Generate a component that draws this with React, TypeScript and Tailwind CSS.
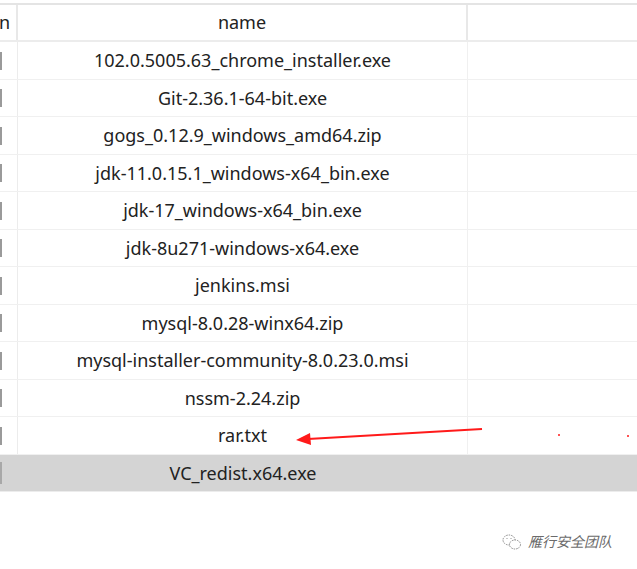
import React from "react";

const files = [
  "102.0.5005.63_chrome_installer.exe",
  "Git-2.36.1-64-bit.exe",
  "gogs_0.12.9_windows_amd64.zip",
  "jdk-11.0.15.1_windows-x64_bin.exe",
  "jdk-17_windows-x64_bin.exe",
  "jdk-8u271-windows-x64.exe",
  "jenkins.msi",
  "mysql-8.0.28-winx64.zip",
  "mysql-installer-community-8.0.23.0.msi",
  "nssm-2.24.zip",
  "rar.txt",
];

export default function App() {
  return (
    <div
      className="relative w-[637px] h-[569px] bg-white overflow-hidden text-[#222]"
      style={{ fontFamily: '"Noto Sans", "Open Sans", sans-serif' }}
    >
      <div className="h-[3px]" />
      <div className="border-t-2 border-[#e4e4e4]">
        {/* header */}
        <div className="flex h-[37px] border-b-2 border-[#ececec] items-center text-[18px]">
          <div className="w-[18px] h-full flex items-center border-r-2 border-[#e8e8e8] overflow-hidden">
            <span className="-ml-[1px]">n</span>
          </div>
          <div className="w-[450px] h-full flex items-center justify-center border-r-2 border-[#e8e8e8]">
            name
          </div>
          <div className="flex-1" />
        </div>
        {files.map((f, i) => (
          <div
            key={f}
            className={`flex ${i % 2 === 0 ? "h-[38px]" : "h-[37px]"} border-b border-[#f0f0f0] items-center text-[18px]`}
          >
            <div className="w-[18px] h-full flex items-center border-r border-[#ececec]">
              <div className="w-[2px] h-[18px] bg-[#9a9a9a] ml-0" />
            </div>
            <div className="w-[450px] h-full flex items-center justify-center border-r border-[#f0f0f0]">
              {f}
            </div>
            <div className="flex-1" />
          </div>
        ))}
        <div className="flex h-[37px] bg-[#d4d4d4] items-center text-[18px] border-b border-[#ececec]">
          <div className="w-[18px] h-full flex items-center">
            <div className="w-[2px] h-[22px] bg-[#a8a8a8]" />
          </div>
          <div className="w-[450px] h-full flex items-center justify-center">VC_redist.x64.exe</div>
          <div className="flex-1" />
        </div>
      </div>

      {/* red arrow annotation */}
      <svg className="absolute left-0 top-0" width="637" height="569">
        <line x1="482" y1="429" x2="308" y2="439" stroke="#ff1a1a" strokeWidth="2" />
        <polygon points="296,440 310,433 311,445" fill="#ff1a1a" />
        <circle cx="559" cy="435" r="1" fill="#ff1a1a" />
        <circle cx="628" cy="436" r="1" fill="#ff1a1a" />
      </svg>

      {/* watermark */}
      <div className="absolute left-[502px] top-[531px] flex items-center gap-[6px] text-[#6b6b6b]">
        <svg width="20" height="18" viewBox="0 0 20 18" fill="none" stroke="#8a8a8a" strokeWidth="1" strokeDasharray="1.5 1">
          <ellipse cx="7" cy="7" rx="6" ry="5" />
          <ellipse cx="13" cy="11.5" rx="5.5" ry="4.5" fill="white" />
          <circle cx="5" cy="5.5" r="0.6" fill="#8a8a8a" stroke="none" />
          <circle cx="9" cy="5.5" r="0.6" fill="#8a8a8a" stroke="none" />
        </svg>
        <span
          className="text-[14px] italic tracking-[0px]"
          style={{ fontFamily: '"Noto Sans CJK SC", sans-serif' }}
        >
          雁行安全团队
        </span>
      </div>
    </div>
  );
}
